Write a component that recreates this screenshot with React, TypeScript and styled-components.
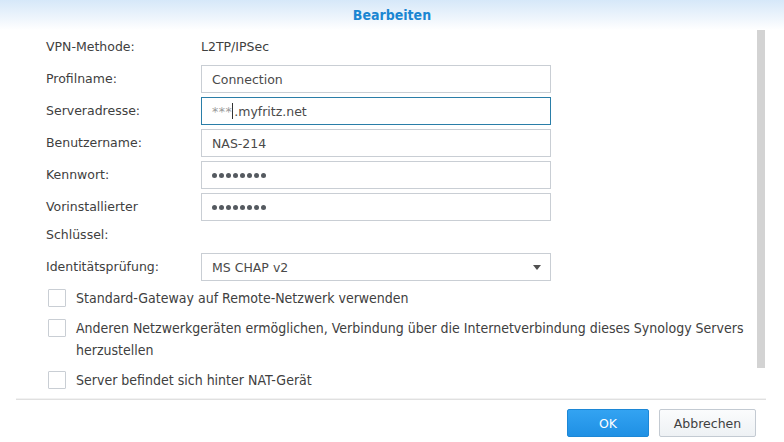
import styled, { createGlobalStyle } from "styled-components";

const GlobalStyle = createGlobalStyle`
    html, body {
        margin: 0;
        padding: 0;
        background: #ffffff;
    }
    body {
        font-family: "DejaVu Sans", Verdana, sans-serif;
        font-size: 12.5px;
        color: #404040;
    }
`;

const Dialog = styled.div`
    width: 784px;
    height: 442px;
    display: flex;
    flex-direction: column;
    background: #ffffff;
    overflow: hidden;
`;

const Header = styled.div`
    height: 30px;
    flex: none;
    display: flex;
    align-items: center;
    justify-content: center;
    background: linear-gradient(#d6e8f9 0%, #eef5fc 60%, #ffffff 100%);
`;

const Title = styled.h1`
    margin: 0;
    font-family: "DejaVu Sans Condensed", "DejaVu Sans", sans-serif;
    font-stretch: condensed;
    font-size: 14px;
    font-weight: bold;
    color: #1a86d2;
`;

const Body = styled.div`
    flex: 1;
    display: flex;
    min-height: 0;
`;

const Content = styled.div`
    flex: 1;
    padding: 3px 0 0 46px;
`;

const Scrollbar = styled.div`
    flex: none;
    width: 8px;
    margin-right: 19px;
    padding-bottom: 31px;
    display: flex;
    flex-direction: column;
`;

const Thumb = styled.div`
    flex: 1;
    background: #d3d3d3;
`;

const Form = styled.div`
    display: grid;
    grid-template-columns: 155px 350px;
    row-gap: 4px;
    align-items: start;
`;

const Label = styled.div`
    line-height: 28px;
    width: 140px;
    color: #404040;
`;

const Value = styled.div`
    line-height: 28px;
    color: #404040;
`;

const Field = styled.div<{ $focused?: boolean }>`
    box-sizing: border-box;
    height: 28px;
    display: flex;
    align-items: center;
    padding: 0 10px;
    border: 1px solid ${({ $focused }) => ($focused ? "#2a7ea8" : "#c9ced4")};
    background: #ffffff;
    color: #4a4a4a;
`;

const Masked = styled.span`
    color: #9a9a9a;
    letter-spacing: 0.5px;
`;

const Caret = styled.span`
    display: inline-block;
    width: 1px;
    height: 16px;
    background: #333333;
    margin: 0 1px 0 0;
`;

const Dots = styled.span`
    display: flex;
    gap: 2px;
`;

const Dot = styled.span`
    width: 5px;
    height: 5px;
    border-radius: 50%;
    background: #555a60;
`;

const Arrow = styled.span`
    margin-left: auto;
    margin-right: -1px;
    width: 0;
    height: 0;
    border-left: 4.5px solid transparent;
    border-right: 4.5px solid transparent;
    border-top: 5px solid #505050;
`;

const Checks = styled.div`
    display: flex;
    flex-direction: column;
    gap: 8px;
    padding: 6px 0 0 2px;
`;

const CheckRow = styled.label`
    display: flex;
    align-items: flex-start;
    gap: 10px;
    padding-right: 4px;
`;

const Box = styled.span`
    flex: none;
    box-sizing: border-box;
    width: 18px;
    height: 18px;
    margin-top: 2px;
    border: 1px solid #c9ced4;
    border-radius: 1px;
    background: #ffffff;
`;

const CheckText = styled.span`
    font-family: "DejaVu Sans Condensed", "DejaVu Sans", sans-serif;
    font-stretch: condensed;
    font-size: 14px;
    line-height: 22px;
    color: #404040;
`;

const Footer = styled.div`
    flex: none;
    margin: 0 18px 0 16px;
    border-top: 1px solid #e0e0e0;
    box-shadow: 0 -1px 0 #f2f2f2;
    display: flex;
    justify-content: flex-end;
    gap: 10px;
    padding: 9px 10px 5px 0;
`;

const Button = styled.button<{ $primary?: boolean }>`
    height: 28px;
    box-sizing: border-box;
    padding: 0;
    width: ${({ $primary }) => ($primary ? "82px" : "97px")};
    border-radius: 2px;
    font-family: "DejaVu Sans", Verdana, sans-serif;
    font-size: 12.5px;
    border: 1px solid ${({ $primary }) => ($primary ? "#1c87d6" : "#c3cad2")};
    background: ${({ $primary }) =>
        $primary
            ? "linear-gradient(#33a3f2, #1f90e4)"
            : "linear-gradient(#fbfcfd, #eef1f4)"};
    color: ${({ $primary }) => ($primary ? "#ffffff" : "#404040")};
`;

const Password = () => (
    <Dots>
        {Array.from({ length: 8 }, (_, i) => (
            <Dot key={i} />
        ))}
    </Dots>
);

const rows: { label: string; field: React.ReactNode; focused?: boolean }[] = [
    { label: "Profilname:", field: "Connection" },
    {
        label: "Serveradresse:",
        focused: true,
        field: (
            <>
                <Masked>***</Masked>
                <Caret />
                .myfritz.net
            </>
        ),
    },
    { label: "Benutzername:", field: "NAS-214" },
    { label: "Kennwort:", field: <Password /> },
    { label: "Vorinstallierter Schlüssel:", field: <Password /> },
];

const checks = [
    "Standard-Gateway auf Remote-Netzwerk verwenden",
    "Anderen Netzwerkgeräten ermöglichen, Verbindung über die Internetverbindung dieses Synology Servers herzustellen",
    "Server befindet sich hinter NAT-Gerät",
];

const App = () => (
    <>
        <GlobalStyle />
        <Dialog>
            <Header>
                <Title>Bearbeiten</Title>
            </Header>
            <Body>
                <Content>
                    <Form>
                        <Label>VPN-Methode:</Label>
                        <Value>L2TP/IPSec</Value>
                        {rows.map((r) => [
                            <Label key={r.label + "-l"}>{r.label}</Label>,
                            <Field key={r.label + "-f"} $focused={r.focused}>
                                {r.field}
                            </Field>,
                        ])}
                        <Label>Identitätsprüfung:</Label>
                        <Field>
                            MS CHAP v2
                            <Arrow />
                        </Field>
                    </Form>
                    <Checks>
                        {checks.map((c) => (
                            <CheckRow key={c}>
                                <Box />
                                <CheckText>{c}</CheckText>
                            </CheckRow>
                        ))}
                    </Checks>
                </Content>
                <Scrollbar>
                    <Thumb />
                </Scrollbar>
            </Body>
            <Footer>
                <Button $primary>OK</Button>
                <Button>Abbrechen</Button>
            </Footer>
        </Dialog>
    </>
);

export default App;
